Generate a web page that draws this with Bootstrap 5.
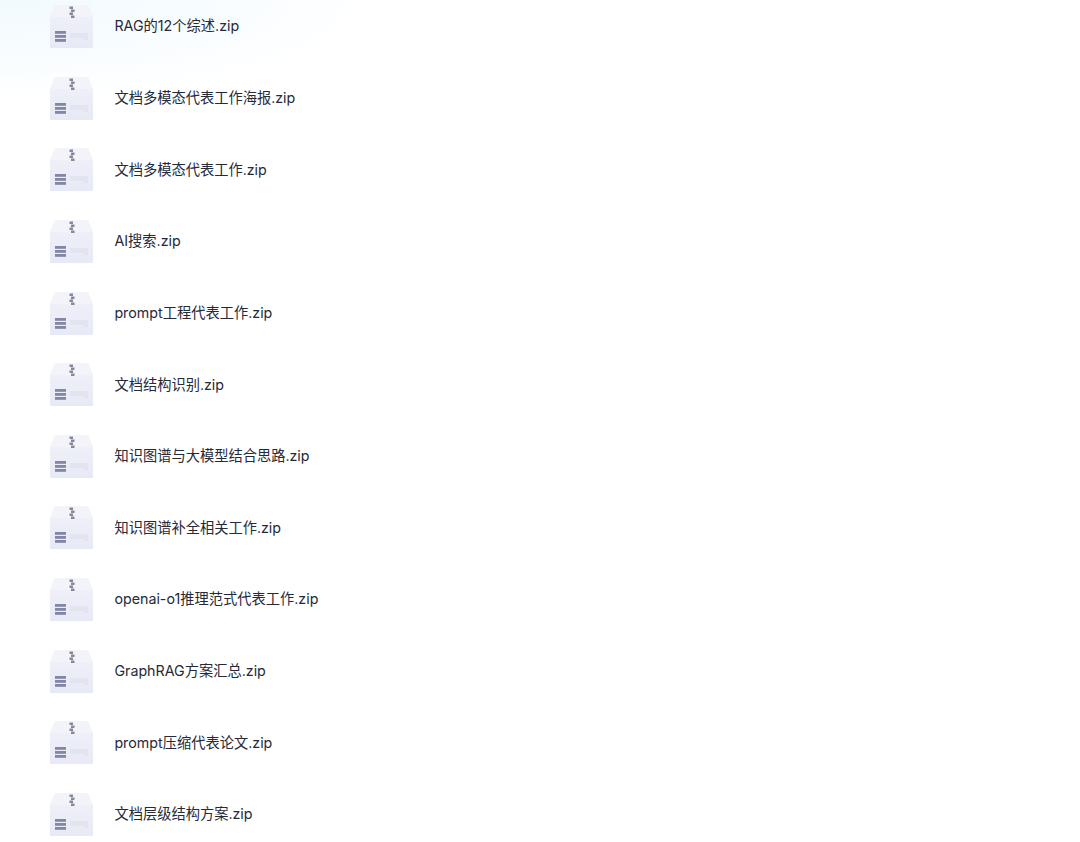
<!DOCTYPE html>
<html lang="zh">
<head>
<meta charset="utf-8">
<title>Files</title>
<link href="https://cdn.jsdelivr.net/npm/bootstrap@5.3.0/dist/css/bootstrap.min.css" rel="stylesheet">
<style>
html,body{height:100%;}
body{background:#fff;overflow:hidden;font-family:Inter,"Noto Sans CJK SC",sans-serif;}
.stage{height:842px;padding:5px 0 0 50px;gap:28.64px;
background:radial-gradient(ellipse 380px 100px at 0 0,#f2fafe 0%,#f7fcff 50%,#fcfeff 80%,#fff 100%);}
.zip-row{height:43px;gap:21.4px;}
.zip-ico{width:43px;height:43px;flex:none;display:block;filter:blur(.5px);}
.zip-name{font-size:14.25px;color:#262a38;line-height:1;white-space:nowrap;}
</style>
</head>
<body>
<svg width="0" height="0" class="d-block position-absolute">
<defs>
<linearGradient id="zg" x1="0" y1="0" x2="0" y2="1"><stop offset="0" stop-color="#f1f2f8"/><stop offset="1" stop-color="#e7e9f6"/></linearGradient>
<symbol id="zip" viewBox="0 0 43 43">
<path d="M5 0H38L43 12V43H0V12Z" fill="url(#zg)"/>
<path d="M0 12L5 0H38L43 12Z" fill="#f3f4f9"/>
<g fill="#858899"><rect x="19.500" y="1.500" width="3.500" height="2.500"/><rect x="21" y="4.500" width="3.500" height="2.500"/><rect x="19.500" y="7.500" width="3.500" height="2.500"/><rect x="21" y="10.500" width="3.500" height="2.500"/></g>
<g fill="#8387a6"><rect x="5" y="26" width="11" height="2.800"/><rect x="5" y="30" width="11" height="2.800"/><rect x="5" y="34" width="11" height="2.800"/></g>
<g fill="#e2e4f0"><rect x="20" y="28" width="15" height="5"/><rect x="33" y="28" width="5" height="7"/></g>
</symbol>
</defs>
</svg>
<div class="stage d-flex flex-column">
<div class="zip-row d-flex align-items-center"><svg class="zip-ico"><use href="#zip"/></svg><span class="zip-name">RAG的12个综述.zip</span></div>
<div class="zip-row d-flex align-items-center"><svg class="zip-ico"><use href="#zip"/></svg><span class="zip-name">文档多模态代表工作海报.zip</span></div>
<div class="zip-row d-flex align-items-center"><svg class="zip-ico"><use href="#zip"/></svg><span class="zip-name">文档多模态代表工作.zip</span></div>
<div class="zip-row d-flex align-items-center"><svg class="zip-ico"><use href="#zip"/></svg><span class="zip-name">AI搜索.zip</span></div>
<div class="zip-row d-flex align-items-center"><svg class="zip-ico"><use href="#zip"/></svg><span class="zip-name">prompt工程代表工作.zip</span></div>
<div class="zip-row d-flex align-items-center"><svg class="zip-ico"><use href="#zip"/></svg><span class="zip-name">文档结构识别.zip</span></div>
<div class="zip-row d-flex align-items-center"><svg class="zip-ico"><use href="#zip"/></svg><span class="zip-name">知识图谱与大模型结合思路.zip</span></div>
<div class="zip-row d-flex align-items-center"><svg class="zip-ico"><use href="#zip"/></svg><span class="zip-name">知识图谱补全相关工作.zip</span></div>
<div class="zip-row d-flex align-items-center"><svg class="zip-ico"><use href="#zip"/></svg><span class="zip-name">openai-o1推理范式代表工作.zip</span></div>
<div class="zip-row d-flex align-items-center"><svg class="zip-ico"><use href="#zip"/></svg><span class="zip-name">GraphRAG方案汇总.zip</span></div>
<div class="zip-row d-flex align-items-center"><svg class="zip-ico"><use href="#zip"/></svg><span class="zip-name">prompt压缩代表论文.zip</span></div>
<div class="zip-row d-flex align-items-center"><svg class="zip-ico"><use href="#zip"/></svg><span class="zip-name">文档层级结构方案.zip</span></div>
</div>
<script src="https://cdn.jsdelivr.net/npm/bootstrap@5.3.0/dist/js/bootstrap.bundle.min.js"></script>
</body>
</html>
